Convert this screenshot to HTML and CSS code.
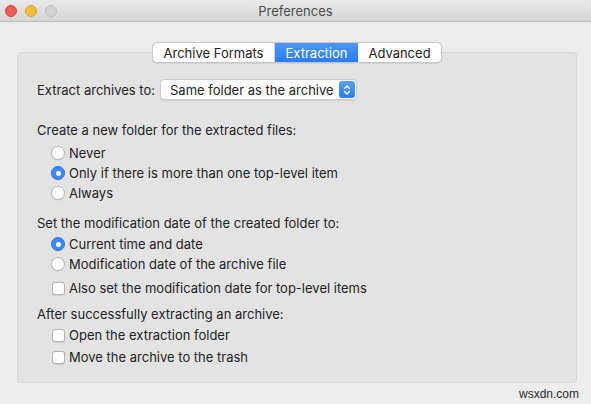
FILE: index.html
```html
<!DOCTYPE html>
<html lang="en">

<head>
    <meta charset="utf-8">
    <title>Preferences</title>
    <link rel="stylesheet" href="styles.css">
</head>

<body>
    <div class="window">
        <div class="titlebar">
            <div class="lights">
                <span class="light red"></span>
                <span class="light yellow"></span>
                <span class="light gray"></span>
            </div>
            <div class="title">Preferences</div>
        </div>

        <div class="tabs">
            <span class="tab tab-formats">Archive Formats</span>
            <span class="tab tab-extract selected">Extraction</span>
            <span class="tab tab-advanced">Advanced</span>
        </div>

        <div class="group">
            <div class="row-target">
                <span class="label">Extract archives to:</span>
                <span class="popup">
                    <span class="popup-text">Same folder as the archive</span>
                    <span class="stepper">
                        <svg width="8" height="12" viewBox="0 0 8 12">
                            <path d="M1.5 4.5 L4 2 L6.5 4.5 M1.5 7.5 L4 10 L6.5 7.5" fill="none" stroke="#fff" stroke-width="1.3" stroke-linecap="round" stroke-linejoin="round"/>
                        </svg>
                    </span>
                </span>
            </div>

            <div class="heading h-folder">Create a new folder for the extracted files:</div>
            <div class="options o-folder">
                <div class="opt"><span class="radio"></span>Never</div>
                <div class="opt"><span class="radio on"></span>Only if there is more than one top-level item</div>
                <div class="opt"><span class="radio"></span>Always</div>
            </div>

            <div class="heading h-date">Set the modification date of the created folder to:</div>
            <div class="options o-date">
                <div class="opt"><span class="radio on"></span>Current time and date</div>
                <div class="opt"><span class="radio"></span>Modification date of the archive file</div>
                <div class="opt opt-check"><span class="check"></span>Also set the modification date for top-level items</div>
            </div>

            <div class="heading h-after">After successfully extracting an archive:</div>
            <div class="options o-after">
                <div class="opt opt-check"><span class="check"></span>Open the extraction folder</div>
                <div class="opt opt-check o-move"><span class="check"></span>Move the archive to the trash</div>
            </div>
        </div>

        <div class="footer">wsxdn.com</div>
    </div>
</body>

</html>
```

FILE: styles.css
```css
html, body {
    margin: 0;
    padding: 0;
}

body {
    width: 591px;
    height: 404px;
    overflow: hidden;
    background: #ececec;
    font-family: Inter, "Liberation Sans", Arial, sans-serif;
    font-size: 13px;
    color: #242424;
}

.window {
    width: 591px;
    height: 404px;
    display: flex;
    flex-direction: column;
}

/* title bar */
.titlebar {
    height: 21px;
    flex: none;
    background: linear-gradient(#e9e9e9, #d6d6d6);
    border-bottom: 1px solid #bdbdbd;
    display: flex;
    align-items: center;
    position: relative;
}

.lights {
    display: flex;
    gap: 8px;
    padding-left: 5px;
}

.light {
    width: 12px;
    height: 12px;
    border-radius: 50%;
    box-sizing: border-box;
}

.red { background: #ed5d55; border: 1px solid #d9473f; }
.yellow { background: #f5bd3e; border: 1px solid #dca233; }
.gray { background: #d2d2d2; border: 1px solid #c1c1c1; }

.title {
    position: absolute;
    left: 0;
    right: 0;
    text-align: center;
    color: #4d4d4d;
    font-size: 13px;
}

/* tabs */
.tabs {
    display: flex;
    margin: 20px 0 0 152px;
    height: 21px;
    width: 290px;
    box-sizing: border-box;
    border: 1px solid #c6c6c6;
    border-radius: 5px;
    background: #fff;
    box-shadow: 0 1px 1px rgba(0, 0, 0, 0.08);
    position: relative;
    z-index: 1;
    overflow: hidden;
}

.tab {
    display: flex;
    align-items: center;
    justify-content: center;
    color: #222;
    box-sizing: border-box;
}

.tab-formats { width: 122px; border-right: 1px solid #d4d4d4; }
.tab-extract { width: 83px; }
.tab-advanced { width: 83px; }

.tab.selected {
    background: linear-gradient(#4c95fa, #2a7cf3);
    color: #fff;
}

/* group box */
.group {
    margin: -11px 0 0 17px;
    width: 560px;
    height: 331px;
    box-sizing: border-box;
    background: #e3e3e3;
    border: 1px solid #d6d6d6;
    border-radius: 4px;
    padding: 26px 0 0 19px;
}

.row-target {
    display: flex;
    align-items: center;
    height: 21px;
}

.label {
    width: 123px;
}

.popup {
    width: 197px;
    height: 21px;
    box-sizing: border-box;
    background: #fff;
    border: 1px solid #cdcdcd;
    border-radius: 4px;
    box-shadow: 0 1px 1px rgba(0, 0, 0, 0.08);
    display: flex;
    align-items: center;
    justify-content: space-between;
    padding: 0 1px 0 9px;
}

.stepper {
    width: 16px;
    height: 17px;
    border-radius: 3px;
    background: linear-gradient(#5a9ffb, #2a7cf3);
    display: flex;
    align-items: center;
    justify-content: center;
}

.heading {
    line-height: 16px;
}

.h-folder { margin-top: 22px; }
.h-date { margin-top: 12px; }
.h-after { margin-top: 8px; }

.options {
    padding-left: 14px;
}

.o-folder { margin-top: 5px; }
.o-date { margin-top: 3px; }
.o-after { margin-top: 3px; }

.opt {
    height: 20px;
    display: flex;
    align-items: center;
}

.opt-check {
    margin-top: 4px;
}

.o-after .opt-check:first-child {
    margin-top: 0;
}

.o-move {
    margin-top: 2px;
}

.radio {
    width: 14px;
    height: 14px;
    box-sizing: border-box;
    border-radius: 50%;
    background: #fff;
    border: 1px solid #b3b3b3;
    box-shadow: 0 0.5px 1px rgba(0, 0, 0, 0.1);
    margin-right: 4px;
    display: flex;
    align-items: center;
    justify-content: center;
}

.radio.on {
    background: #3a87f6;
    border-color: #2f78e6;
}

.radio.on::after {
    content: "";
    width: 5px;
    height: 5px;
    border-radius: 50%;
    background: #fff;
}

.check {
    width: 13px;
    height: 13px;
    box-sizing: border-box;
    border-radius: 3px;
    background: #fff;
    border: 1px solid #b3b3b3;
    box-shadow: 0 0.5px 1px rgba(0, 0, 0, 0.1);
    margin: 0 4px 0 1px;
}

.footer {
    flex: 1;
    display: flex;
    justify-content: flex-end;
    align-items: center;
    padding-right: 12px;
    font-family: "Liberation Sans", Arial, sans-serif;
    font-size: 12px;
    color: #2a2a2a;
}
```
